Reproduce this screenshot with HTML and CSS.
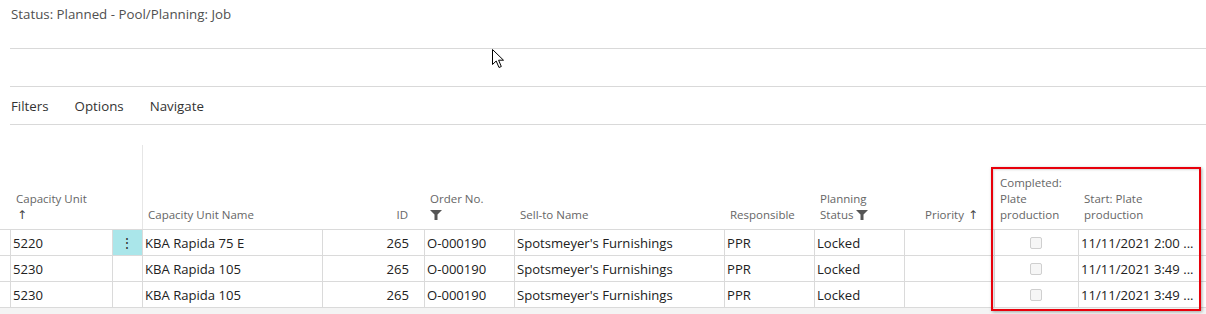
FILE: index.html
```html
<!DOCTYPE html>
<html lang="en">
<head>
<meta charset="utf-8">
<title>Status: Planned - Pool/Planning: Job</title>
<link rel="stylesheet" href="styles.css">
</head>
<body>
<div class="page">
  <div class="top"><span class="title">Status: Planned - Pool/Planning: Job</span></div>
  <div class="spacer"></div>
  <nav class="menu">
    <span>Filters</span>
    <span>Options</span>
    <span>Navigate</span>
  </nav>

  <div class="grid">
    <div class="row head">
      <div class="c"></div>
      <div class="c h">Capacity Unit<br><span class="arrow">↑</span></div>
      <div class="c h"></div>
      <div class="c h sep">Capacity Unit Name</div>
      <div class="c h right">ID</div>
      <div class="c h">Order No.<br><svg class="funnel" viewBox="0 0 12 10" width="12" height="10"><polygon points="0,0 12,0 7.5,4.6 7.5,10 4.5,10 4.5,4.6"/></svg></div>
      <div class="c h">Sell-to Name</div>
      <div class="c h">Responsible</div>
      <div class="c h">Planning<br>Status <svg class="funnel" viewBox="0 0 12 10" width="12" height="10"><polygon points="0,0 12,0 7.5,4.6 7.5,10 4.5,10 4.5,4.6"/></svg></div>
      <div class="c h right">Priority <span class="arrow">↑</span></div>
      <div class="c h">Completed:<br>Plate<br>production</div>
      <div class="c h">Start: Plate<br>production</div>
    </div>

    <div class="row">
      <div class="c"></div>
      <div class="c b">5220</div>
      <div class="c b dots">⋮</div>
      <div class="c b">KBA Rapida 75 E</div>
      <div class="c b right">265</div>
      <div class="c b">O-000190</div>
      <div class="c b">Spotsmeyer's Furnishings</div>
      <div class="c b">PPR</div>
      <div class="c b">Locked</div>
      <div class="c b"></div>
      <div class="c b center"><span class="box"></span></div>
      <div class="c b">11/11/2021 2:00 ...</div>
    </div>
    <div class="row">
      <div class="c"></div>
      <div class="c b">5230</div>
      <div class="c b"></div>
      <div class="c b">KBA Rapida 105</div>
      <div class="c b right">265</div>
      <div class="c b">O-000190</div>
      <div class="c b">Spotsmeyer's Furnishings</div>
      <div class="c b">PPR</div>
      <div class="c b">Locked</div>
      <div class="c b"></div>
      <div class="c b center"><span class="box"></span></div>
      <div class="c b">11/11/2021 3:49 ...</div>
    </div>
    <div class="row last">
      <div class="c"></div>
      <div class="c b">5230</div>
      <div class="c b"></div>
      <div class="c b">KBA Rapida 105</div>
      <div class="c b right">265</div>
      <div class="c b">O-000190</div>
      <div class="c b">Spotsmeyer's Furnishings</div>
      <div class="c b">PPR</div>
      <div class="c b">Locked</div>
      <div class="c b"></div>
      <div class="c b center"><span class="box"></span></div>
      <div class="c b">11/11/2021 3:49 ...</div>
    </div>
  </div>
  <div class="foot"></div>

  <div class="highlight"></div>
  <svg class="cursor" width="13" height="20" viewBox="0 0 13 20"><path d="M0.5,0.5 L0.5,15.5 L4.2,12 L7,18.5 L9.3,17.5 L6.6,11.2 L11.5,11.2 Z" fill="#fff" stroke="#000" stroke-width="1" stroke-linejoin="miter"/></svg>
</div>
</body>
</html>
```
FILE: styles.css
```css
html, body {
  margin: 0;
  padding: 0;
  background: #ffffff;
}
body {
  font-family: "Open Sans", "Noto Sans", "Liberation Sans", sans-serif;
  color: #212121;
  overflow: hidden;
}
.page {
  position: relative;
  width: 1206px;
  height: 314px;
}
.top {
  margin-left: 10px;
  height: 48px;
  border-bottom: 1px solid #d9d9d9;
}
.title {
  display: block;
  margin-left: 1px;
  line-height: 28px;
  font-size: 13.3px;
  color: #505050;
}
.spacer {
  margin-left: 10px;
  height: 37px;
  border-bottom: 1px solid #d9d9d9;
}
.menu {
  margin-left: 10px;
  height: 37px;
  border-bottom: 1px solid #d9d9d9;
  display: flex;
  align-items: center;
  gap: 26px;
  padding-left: 1px;
  font-size: 13.3px;
  color: #333;
}
.grid {
  margin-top: 20px;
}
.row {
  display: grid;
  grid-template-columns: 10px 102px 30px 180px 102px 90px 210px 90px 90px 90px 84px 128px;
  height: 26px;
  box-sizing: border-box;
  border-top: 1px solid #dadada;
}
.row.last {
  height: 27px;
  border-bottom: 1px solid #dadada;
}
.row.head {
  height: 84px;
  border-top: none;
}
.c {
  box-sizing: border-box;
  white-space: nowrap;
  overflow: hidden;
}
.h {
  font-size: 11.5px;
  line-height: 16px;
  color: #666;
  align-self: end;
  padding: 0 6px 6px 6px;
}
.h.sep {
  align-self: stretch;
  display: flex;
  align-items: flex-end;
  border-left: 1px solid #e6e6e6;
  padding-left: 5px;
}
.h.right {
  text-align: right;
  padding-right: 16px;
}
.arrow {
  font-family: "DejaVu Sans", sans-serif;
  font-size: 12px;
  color: #444;
  display: inline-block;
  margin-left: 1px;
}
.funnel {
  fill: #555;
  vertical-align: -1px;
}
.b {
  border-left: 1px solid #dadada;
  font-size: 13.1px;
  line-height: 24px;
  padding: 1px 3px 0 2px;
}
.b.right {
  text-align: right;
  padding-right: 15px;
}
.b.center {
  display: flex;
  align-items: center;
  justify-content: center;
}
.dots {
  background: #aae6ea;
  text-align: center;
  font-size: 14px;
  color: #333;
}
.box {
  width: 12px;
  height: 12px;
  box-sizing: border-box;
  border: 1px solid #cfcfcf;
  border-radius: 2px;
  background: #f6f6f6;
}
.foot {
  height: 8px;
  background: #f4f4f4;
}
.highlight {
  position: absolute;
  left: 991px;
  top: 167px;
  width: 210px;
  height: 144px;
  box-sizing: border-box;
  border: 2px solid #e8000b;
  box-shadow: 1px 1px 3px rgba(0,0,0,0.35), inset 1px 1px 2px rgba(0,0,0,0.15);
}
.cursor {
  position: absolute;
  left: 492px;
  top: 49px;
}
```
